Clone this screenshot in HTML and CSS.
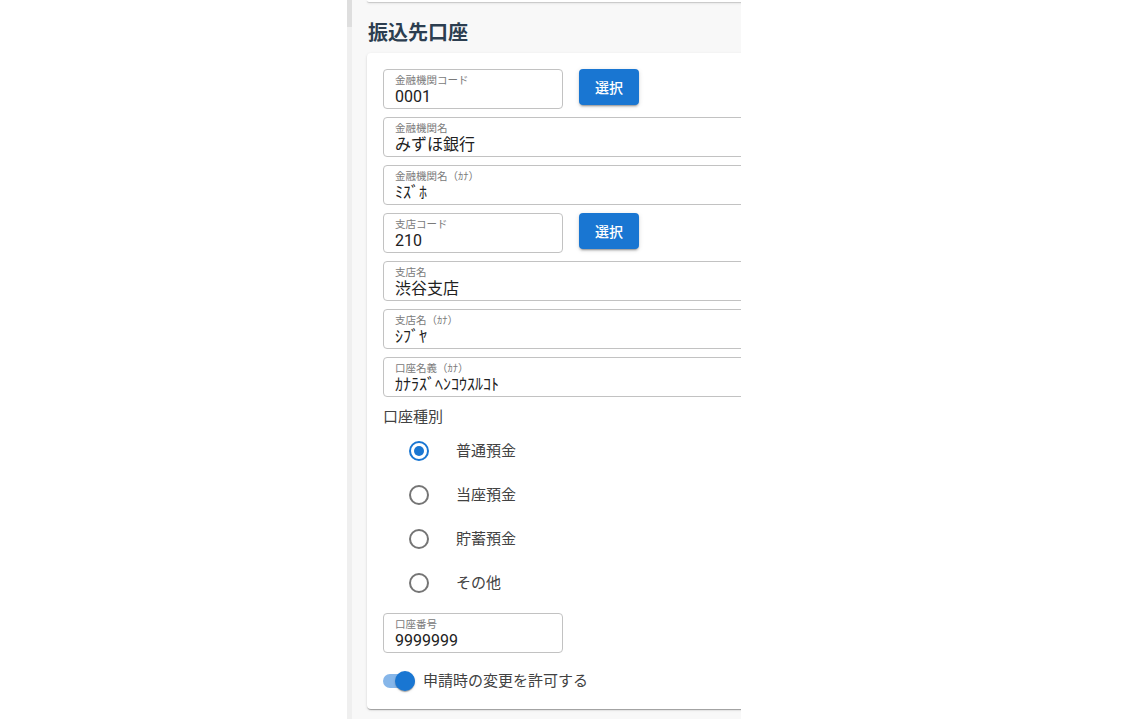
FILE: index.html
```html
<!DOCTYPE html>
<html lang="ja">
<head>
<meta charset="utf-8">
<title>振込先口座</title>
<link rel="stylesheet" href="styles.css">
</head>
<body>
<div class="page">
  <div class="gutter"></div>
  <div class="panel">
    <div class="strip"><div class="strip-thumb"></div></div>
    <div class="content">
      <div class="prev-card"></div>
      <h2 class="title">振込先口座</h2>
      <div class="card">
        <div class="row">
          <div class="field short"><span class="label">金融機関コード</span><span class="value">0001</span></div>
          <button class="btn">選択</button>
        </div>
        <div class="row">
          <div class="field full"><span class="label">金融機関名</span><span class="value">みずほ銀行</span></div>
        </div>
        <div class="row">
          <div class="field full"><span class="label">金融機関名（ｶﾅ）</span><span class="value">ﾐｽﾞﾎ</span></div>
        </div>
        <div class="row">
          <div class="field short"><span class="label">支店コード</span><span class="value">210</span></div>
          <button class="btn">選択</button>
        </div>
        <div class="row">
          <div class="field full"><span class="label">支店名</span><span class="value">渋谷支店</span></div>
        </div>
        <div class="row">
          <div class="field full"><span class="label">支店名（ｶﾅ）</span><span class="value">ｼﾌﾞﾔ</span></div>
        </div>
        <div class="row">
          <div class="field full"><span class="label">口座名義（ｶﾅ）</span><span class="value">ｶﾅﾗｽﾞﾍﾝｺｳｽﾙｺﾄ</span></div>
        </div>
        <div class="radio-group">
          <div class="group-label">口座種別</div>
          <div class="radio-row"><span class="radio checked"></span><span class="radio-text">普通預金</span></div>
          <div class="radio-row"><span class="radio"></span><span class="radio-text">当座預金</span></div>
          <div class="radio-row"><span class="radio"></span><span class="radio-text">貯蓄預金</span></div>
          <div class="radio-row"><span class="radio"></span><span class="radio-text">その他</span></div>
        </div>
        <div class="row">
          <div class="field short"><span class="label">口座番号</span><span class="value">9999999</span></div>
        </div>
        <div class="switch-row">
          <span class="switch"><span class="track"></span><span class="thumb"></span></span>
          <span class="switch-text">申請時の変更を許可する</span>
        </div>
      </div>
    </div>
  </div>
</div>
</body>
</html>
```

FILE: styles.css
```css
html, body {
  margin: 0;
  padding: 0;
  background: #ffffff;
  height: 719px;
  overflow: hidden;
  font-family: Roboto, "Noto Sans CJK JP", sans-serif;
}

.page {
  display: flex;
  height: 719px;
}

.gutter {
  width: 347px;
  flex: none;
}

.panel {
  width: 394px;
  flex: none;
  display: flex;
  overflow: hidden;
  height: 719px;
}

.strip {
  width: 5px;
  flex: none;
  background: #efefef;
  display: flex;
  flex-direction: column;
}

.strip-thumb {
  height: 27px;
  background: #dedede;
}

.content {
  flex: 1;
  background: #f8f8f8;
  padding-left: 15px;
  overflow: hidden;
  min-width: 0;
}

.prev-card {
  width: 700px;
  height: 2px;
  background: #ffffff;
  border-radius: 0 0 4px 4px;
  box-shadow: 0 2px 1px -1px rgba(0,0,0,.2), 0 1px 1px 0 rgba(0,0,0,.14), 0 1px 3px 0 rgba(0,0,0,.12);
}

.title {
  margin: 17px 0 0 1px;
  font-size: 20px;
  line-height: 28px;
  font-weight: 700;
  color: #2c3e50;
}

.card {
  margin-top: 6px;
  width: 700px;
  box-sizing: border-box;
  background: #ffffff;
  border-radius: 4px;
  padding: 16px 16px 8px 16px;
  box-shadow: 0 2px 1px -1px rgba(0,0,0,.2), 0 1px 1px 0 rgba(0,0,0,.14), 0 1px 3px 0 rgba(0,0,0,.12);
  display: flex;
  flex-direction: column;
  gap: 8px;
}

.row {
  display: flex;
  align-items: flex-start;
  gap: 16px;
}

.field {
  box-sizing: border-box;
  height: 40px;
  border: 1px solid #c2c2c2;
  border-radius: 4px;
  padding: 4px 11px 0 11px;
  display: flex;
  flex-direction: column;
}

.field.short {
  width: 180px;
}

.field.full {
  flex: 1;
}

.label {
  font-size: 10.5px;
  line-height: 13px;
  color: #7a7a7a;
  white-space: nowrap;
}

.value {
  font-size: 16px;
  line-height: 20px;
  color: #212121;
  white-space: nowrap;
}

.btn {
  width: 60px;
  height: 36px;
  border: none;
  border-radius: 4px;
  background: #1976d2;
  color: #ffffff;
  font-family: Roboto, "Noto Sans CJK JP", sans-serif;
  font-size: 14px;
  font-weight: 500;
  padding: 0;
  box-shadow: 0 3px 1px -2px rgba(0,0,0,.2), 0 2px 2px 0 rgba(0,0,0,.14), 0 1px 5px 0 rgba(0,0,0,.12);
}

.radio-group {
  display: flex;
  flex-direction: column;
}

.group-label {
  font-size: 15px;
  line-height: 24px;
  color: #424242;
}

.radio-row {
  height: 44px;
  display: flex;
  align-items: center;
  padding-left: 26px;
}

.radio {
  box-sizing: border-box;
  width: 20px;
  height: 20px;
  border: 2px solid #757575;
  border-radius: 50%;
  display: flex;
  align-items: center;
  justify-content: center;
  flex: none;
}

.radio.checked {
  border-color: #1976d2;
}

.radio.checked::after {
  content: "";
  width: 10px;
  height: 10px;
  border-radius: 50%;
  background: #1976d2;
}

.radio-text {
  margin-left: 27px;
  font-size: 15px;
  line-height: 18px;
  color: #424242;
}

.switch-row {
  height: 40px;
  display: flex;
  align-items: center;
}

.switch {
  position: relative;
  width: 32px;
  height: 20px;
  display: flex;
  align-items: center;
  flex: none;
}

.track {
  width: 32px;
  height: 14px;
  border-radius: 7px;
  background: #86b6e9;
}

.thumb {
  position: absolute;
  right: 0;
  top: 0;
  width: 20px;
  height: 20px;
  border-radius: 50%;
  background: #1976d2;
  box-shadow: 0 2px 1px -1px rgba(0,0,0,.2), 0 1px 1px 0 rgba(0,0,0,.14), 0 1px 3px 0 rgba(0,0,0,.12);
}

.switch-text {
  margin-left: 8px;
  font-size: 15px;
  line-height: 18px;
  color: #424242;
}
```
